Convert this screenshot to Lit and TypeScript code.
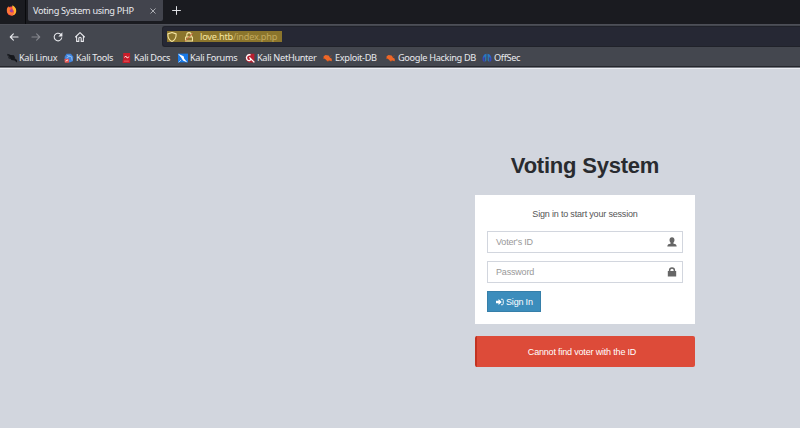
import { LitElement, html, css, svg } from "lit";
import { customElement } from "lit/decorators.js";

const icon = (body: unknown, cls = "") =>
  html`<svg class="icon ${cls}" viewBox="0 0 16 16" aria-hidden="true">${body}</svg>`;

const back = svg`<path class="line" d="M14.500 8H2M7 3 2 8l5 5"/>`;
const forward = svg`<path class="line" d="M1.500 8H14M9 3l5 5-5 5"/>`;
const reload = svg`<path class="line" d="M14 9.200A6.100 6.100 0 1 1 12 3.400l1.700 1.700"/><path fill="currentColor" d="M15 .5v6.500H8.500z"/>`;
const home = svg`<path class="line" d="M.8 8 8 1 15.200 8M2.600 7v8h3.500v-4.600c0-2.500 3.800-2.500 3.800 0V15h3.500V7"/>`;
const shield = svg`<path class="line" d="M8 .8 14.600 3c.3 5.800-1.600 9.800-6.600 12.200C3 12.800 1.100 8.800 1.400 3z"/>`;
const lock = svg`<path class="line" d="M4.500 8V4.500a3.500 3.500 0 0 1 7 0V8M2.500 8h11v6.500h-11z"/><path d="M2 14.500 14 2" stroke="#d9684c" stroke-width="1.500"/>`;
const firefox = svg`
  <circle cx="8" cy="8.800" r="6.800" fill="#f5444f"/>
  <path fill="#ffb52e" d="M9.500.3c3.800 2 5.800 5.300 5.300 9.100-.6 3.700-4 6-7.300 5.800 3-1.200 4.500-3.200 4-6C11 6.500 8 5 9.500.3z"/>
  <path fill="#ff7a35" d="M1.300 8C.8 5 2.500 3 3.600 1.800 4 4 6 4.500 7.500 5.200L5 8c1 3 4 4 6.500 2-.6 3-3 4.700-5.500 4.300C3.500 13.800 1.600 11 1.300 8z"/>
  <circle cx="7.800" cy="8.400" r="2.200" fill="#9a459f"/>`;

const dragon = svg`<path d="M0 1 6 3l5 .5L13 7l-1 1 4 3v4l-4-3-5-1L5 7.500 1 6l3-1z" fill="#15171c"/><path d="M0 3l5 1M2 7.500 6 9" stroke="#15171c" stroke-width="1.500"/>`;
const tools = svg`<path d="M1 6 4 1l7 0 4 5-1 7-5 2-8-4z" fill="#3f83dc"/><path d="M5 4l7 2 1 6M4 8l5-3" fill="none" stroke="#a9cff5" stroke-width="1.200"/><rect x="1" y="9" width="7" height="6.500" rx="1" fill="#e35652"/><path d="M2.500 13 6.500 11" stroke="#fff" stroke-width="1.300"/>`;
const docs = svg`<path d="M2 0h11v16H1V12l1-1z" fill="#c91d2a"/><path d="M3.500 7l3-2 1.500 3 3.500-2" fill="none" stroke="#ffd3d3" stroke-width="1.500"/><path d="M3 13h8" stroke="#ee8585"/>`;
const forums = svg`<path d="M0 1h16v14H0z" fill="#1979e6"/><path d="M0 1l9 4 1 4 5 6-7-3-3-5z" fill="#fff"/><path d="M1 15l4-4" stroke="#c6e2ff" stroke-width="1.200"/>`;
const nethunter = svg`<path d="M2 5 6 1h9v14H6l-5-4z" fill="#b91f30"/><path d="M9 3C4 2 1 6 3 10c2 4 7 2 6-1L7 7l8 8" fill="none" stroke="#fff" stroke-width="2.200"/>`;
const exploit = svg`<path d="M1 5l3-2 5 1 2 3 3 2v4l-4-1-3 1-3-3-3-1z" fill="#ed6728"/><path d="M0 8l3 1M8 12v2M11 6l2-2" stroke="#c34b16" stroke-width="1.200"/>`;
const offsec = svg`<path d="M7 1C2 2 0 6 1 12l3 3V8l3-3zM9 1c5 1 7 5 6 11l-3 3V8L9 5z" fill="#3549bd"/><path d="M7 1C4 2 2 4 2 8l3-3v9l2-2zM9 1v11l2 2V5l3 3c0-4-2-6-5-7z" fill="#287fba"/>`;

const user = svg`<path fill="currentColor" d="M8 .5c2.600 0 4 1.900 4 4.300 0 1.800-.7 3.300-1.900 4.200v1.500c2.900.8 5.400 1.400 5.400 4.500H.5c0-3.100 2.500-3.700 5.400-4.500V9C4.700 8.100 4 6.600 4 4.800 4 2.400 5.400.5 8 .5z"/>`;
const padlock = svg`<path fill="currentColor" d="M1.300 6.500H3V5.200a5 5 0 0 1 10 0v1.300h1.700V15H1.300zM5.400 6.500h5.200V5.200a2.600 2.600 0 0 0-5.200 0z"/>`;
const signIn = svg`<path fill="currentColor" d="M0 5.500h5V2l6.500 6L5 14v-3.500H0z"/><path d="M10 2.500h2.500a2 2 0 0 1 2 2v7a2 2 0 0 1-2 2H10" fill="none" stroke="currentColor" stroke-width="1.800"/>`;

const bookmarks = [
  { label: "Kali Linux", art: dragon },
  { label: "Kali Tools", art: tools },
  { label: "Kali Docs", art: docs },
  { label: "Kali Forums", art: forums },
  { label: "Kali NetHunter", art: nethunter },
  { label: "Exploit-DB", art: exploit },
  { label: "Google Hacking DB", art: exploit },
  { label: "OffSec", art: offsec },
];

@customElement("browser-chrome")
export class BrowserChrome extends LitElement {
  static styles = css`
    :host { display: block; height: 68px; color: #e9eaee; background: #44474f; font: 9.2px/12px "Noto Sans", sans-serif; letter-spacing: -0.32px; }
    * { box-sizing: border-box; }
    .icon { display: block; flex: none; width: 10px; height: 10px; }
    .line { fill: none; stroke: currentColor; stroke-width: 1.7; stroke-linecap: round; stroke-linejoin: round; }
    .tabs { display: flex; height: 24px; background: #1a1b20; }
    .pinned { width: 26px; padding: 5px 0 0 6px; border-right: 1px solid #090a0d; }
    .pinned .icon { width: 11px; height: 11px; }
    .tab { display: flex; align-items: center; justify-content: space-between; width: 135px; height: 21px; margin-left: 2px; padding: 0 7px 0 5px; background: #42444d; border-radius: 0 0 2px 2px; white-space: nowrap; }
    .close { width: 6px; height: 6px; }
    .plus { width: 9px; height: 9px; margin: 6px 0 0 9px; }
    .nav { display: flex; height: 23px; background: #44474f; border-top: 1px solid #4d4f57; }
    .buttons { display: grid; grid-template-columns: 22px 22px 22px 10px; width: 162px; padding: 7px 0 0 9px; }
    .dim { color: #85878e; }
    .address { flex: 1; height: 21px; padding: 4px 0 0 4px; background: #262834; border: 1px solid #20222a; border-right: 0; border-radius: 3px 0 0 3px; margin-top: 1px; }
    .url { display: flex; align-items: center; width: 115px; height: 11px; color: #f5e5a2; background: #8b752c; white-space: nowrap; letter-spacing: -0.22px; }
    .url .icon { margin-right: 7px; }
    .host { margin-left: -1px; }
    .path { color: #c2a95f; }
    .bookmarks { display: grid; grid-template-columns: 57px 58px 56px 67px 78px 63px 96px auto; height: 19px; padding: 5px 0 0 7px; white-space: nowrap; }
    .bookmark { display: flex; align-items: center; gap: 2px; height: 12px; }
    .edge { height: 2px; background: #25272d; border-bottom: 1px solid #777a82; }
  `;
  render() {
    return html`
      <div class="tabs">
        <div class="pinned">${icon(firefox)}</div>
        <div class="tab"><span>Voting System using PHP</span>${icon(svg`<path class="line" d="M2 2l12 12M14 2 2 14"/>`, "close")}</div>
        ${icon(svg`<path class="line" d="M8 1v14M1 8h14"/>`, "plus")}
      </div>
      <div class="nav">
        <div class="buttons">${icon(back)}${icon(forward, "dim")}${icon(reload)}${icon(home)}</div>
        <div class="address"><div class="url">${icon(shield)}${icon(lock)}<span class="host">love.htb<span class="path">/index.php</span></span></div></div>
      </div>
      <div class="bookmarks">${bookmarks.map((b) => html`<div class="bookmark">${icon(b.art)}<span>${b.label}</span></div>`)}</div>
      <div class="edge"></div>`;
  }
}

@customElement("app-root")
export class AppRoot extends LitElement {
  static styles = css`
    :host { display: block; height: 428px; overflow: hidden; background: #d2d6de; color: #333; font: 9px/12px "Liberation Sans", Arial, sans-serif; letter-spacing: -0.18px; }
    * { box-sizing: border-box; }
    .page { border-top: 1px solid #eceef3; }
    .login { width: 220px; margin-left: 475px; padding-top: 82px; }
    .title { margin: 0; height: 44px; font-size: 22px; line-height: 30px; letter-spacing: -0.22px; text-align: center; color: #292b2f; }
    .card { height: 129px; padding: 13px 12px 0; background: #fff; }
    .message { margin: 0 0 11px; text-align: center; color: #555; }
    .field { display: flex; align-items: center; justify-content: space-between; height: 22px; margin-bottom: 8px; padding: 0 5px 0 8px; border: 1px solid #d2d6de; color: #999; }
    .icon { display: block; width: 10px; height: 10px; color: #666; }
    .button { display: flex; align-items: center; gap: 2px; width: 54px; height: 21px; padding: 0 0 0 8px; border: 1px solid #367fa9; background: #3c8dbc; color: #fff; font: inherit; letter-spacing: inherit; white-space: nowrap; }
    .button .icon { width: 8px; height: 8px; color: #fff; }
    .alert { height: 31px; margin-top: 12px; padding: 1px 8px 0 0; border-left: 2px solid #c23321; border-radius: 2px; background: #dd4b39; color: #fff; line-height: 31px; text-align: center; }
  `;
  render() {
    return html`
      <browser-chrome></browser-chrome>
      <main class="page">
        <div class="login">
          <h1 class="title">Voting System</h1>
          <div class="card">
            <p class="message">Sign in to start your session</p>
            <div class="field"><span>Voter's ID</span>${icon(user)}</div>
            <div class="field"><span>Password</span>${icon(padlock)}</div>
            <button class="button">${icon(signIn)}<span>Sign In</span></button>
          </div>
          <div class="alert">Cannot find voter with the ID</div>
        </div>
      </main>`;
  }
}
